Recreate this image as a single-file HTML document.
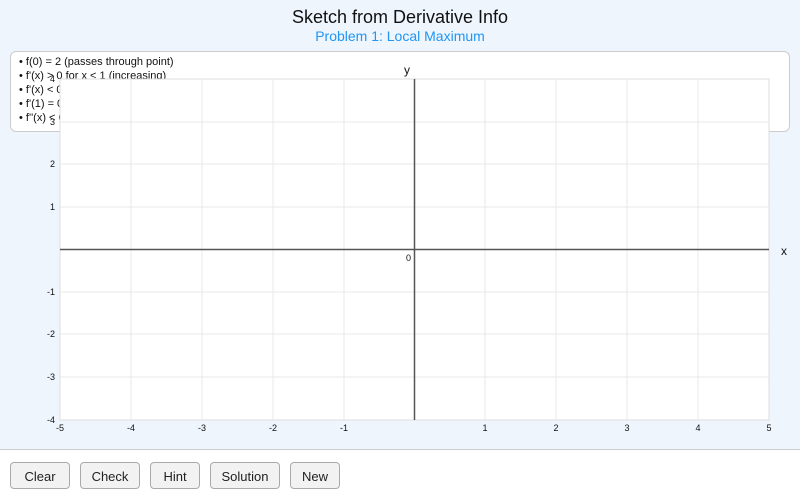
<!DOCTYPE html><html><head><style>
body{margin:0;width:800px;height:502px;overflow:hidden;background:#eef5fd;font-family:"Liberation Sans",sans-serif;position:relative}
.t{position:absolute;top:7px;left:0;width:800px;text-align:center;font-size:18px;color:#111}
.s{position:absolute;top:28px;left:0;width:800px;text-align:center;font-size:14px;color:#2196f3}
.box{position:absolute;left:10px;top:51px;width:778px;height:79px;background:#fff;border:1px solid #ccc;border-radius:6px;font-size:11px;color:#111}
.box div{position:absolute;left:8px}
svg{position:absolute;left:0;top:0}
.bar{position:absolute;left:0;top:449px;width:800px;height:53px;background:#fff;border-top:1px solid #ccc}
.b{position:absolute;top:12px;height:27px;border:1px solid #aaa;border-radius:4px;background:#f2f2f2;font-size:13px;color:#222;text-align:center;line-height:27px;box-sizing:border-box}
</style></head><body>
<div class="t">Sketch from Derivative Info</div>
<div class="s">Problem 1: Local Maximum</div>
<div class="box">
<div style="top:4px">• f(0) = 2 (passes through point)</div>
<div style="top:18px">• f'(x) &gt; 0 for x &lt; 1 (increasing)</div>
<div style="top:32px">• f'(x) &lt; 0</div>
<div style="top:46px">• f'(1) = 0</div>
<div style="top:60px">• f''(x) &lt; 0</div>
</div>
<svg width="800" height="450" font-family="Liberation Sans,sans-serif" font-size="9" fill="#111">
<rect x="60" y="79" width="709" height="341" fill="#fff" stroke="#ddd"/>
<g stroke="#e8e8e8" stroke-width="1">
<line x1="131" y1="79" x2="131" y2="420"/><line x1="202" y1="79" x2="202" y2="420"/><line x1="273" y1="79" x2="273" y2="420"/><line x1="344" y1="79" x2="344" y2="420"/><line x1="485" y1="79" x2="485" y2="420"/><line x1="556" y1="79" x2="556" y2="420"/><line x1="627" y1="79" x2="627" y2="420"/><line x1="698" y1="79" x2="698" y2="420"/>
<line x1="60" y1="122" x2="769" y2="122"/><line x1="60" y1="164" x2="769" y2="164"/><line x1="60" y1="207" x2="769" y2="207"/><line x1="60" y1="292" x2="769" y2="292"/><line x1="60" y1="334" x2="769" y2="334"/><line x1="60" y1="377" x2="769" y2="377"/>
</g>
<line x1="414.5" y1="79" x2="414.5" y2="420" stroke="#555" stroke-width="1.5"/>
<line x1="60" y1="249.5" x2="769" y2="249.5" stroke="#555" stroke-width="1.5"/>
<text x="404" y="74" font-size="12">y</text><text x="781" y="255" font-size="12">x</text>
<text x="406" y="261">0</text>
<g text-anchor="middle"><text x="60" y="431">-5</text><text x="131" y="431">-4</text><text x="202" y="431">-3</text><text x="273" y="431">-2</text><text x="344" y="431">-1</text><text x="485" y="431">1</text><text x="556" y="431">2</text><text x="627" y="431">3</text><text x="698" y="431">4</text><text x="769" y="431">5</text></g>
<g text-anchor="end"><text x="55" y="82">4</text><text x="55" y="125">3</text><text x="55" y="167">2</text><text x="55" y="210">1</text><text x="55" y="295">-1</text><text x="55" y="337">-2</text><text x="55" y="380">-3</text><text x="55" y="423">-4</text></g>
</svg>
<div class="bar">
<div class="b" style="left:10px;width:60px">Clear</div>
<div class="b" style="left:80px;width:60px">Check</div>
<div class="b" style="left:150px;width:50px">Hint</div>
<div class="b" style="left:210px;width:70px">Solution</div>
<div class="b" style="left:290px;width:50px">New</div>
</div>
</body></html>
